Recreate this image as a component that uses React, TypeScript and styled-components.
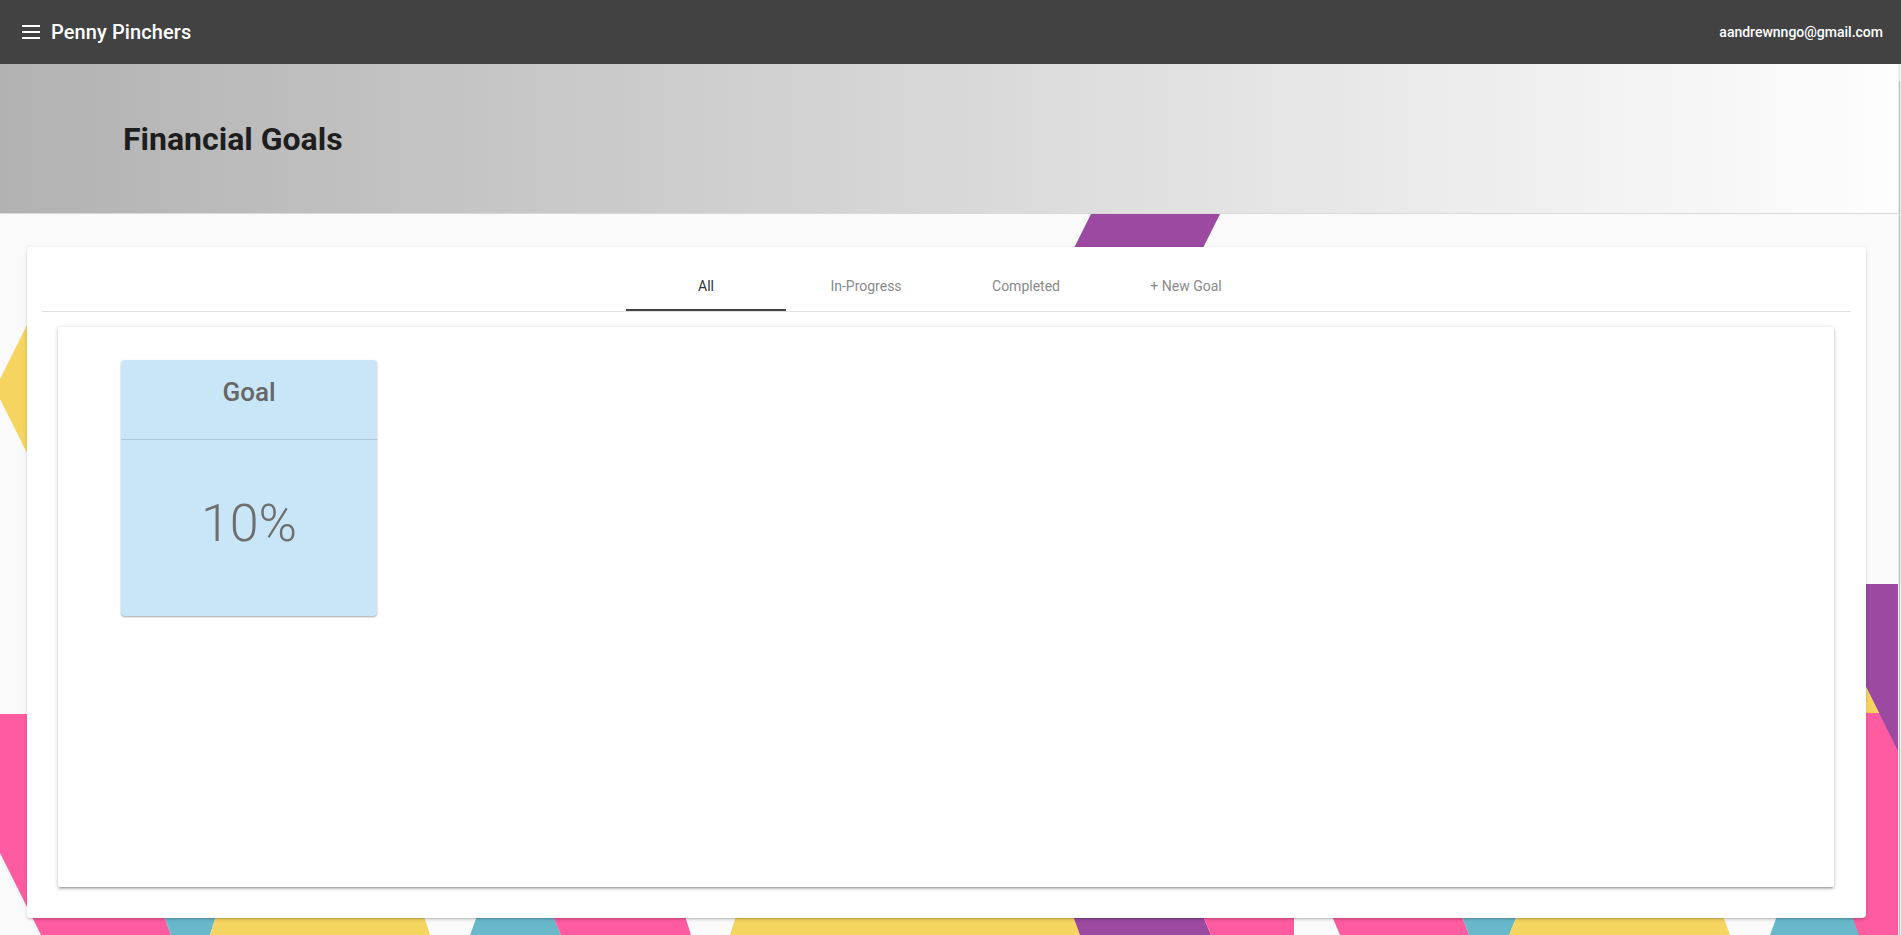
import React, { useState } from 'react';
import styled, { createGlobalStyle } from 'styled-components';

const GlobalStyle = createGlobalStyle`
  html, body {
    margin: 0;
    padding: 0;
    height: 100%;
    overflow: hidden;
  }

  body {
    background: #fafafa;
    font-family: Roboto, "Liberation Sans", Arial, sans-serif;
    -webkit-font-smoothing: antialiased;
  }

  * {
    box-sizing: border-box;
  }
`;

const Shell = styled.div`
  display: flex;
  flex-direction: column;
  height: 100vh;
`;

const NavBar = styled.nav`
  height: 64px;
  flex-shrink: 0;
  background: #424242;
  color: #fff;
  display: flex;
  align-items: center;
  justify-content: space-between;
  padding: 0 18px 0 19px;
`;

const Brand = styled.div`
  display: flex;
  align-items: center;
  gap: 8px;
  font-size: 20px;
  font-weight: 500;
  letter-spacing: 0.1px;
`;

const MenuButton = styled.button`
  width: 24px;
  height: 24px;
  padding: 0;
  border: none;
  background: transparent;
  color: #fff;
  cursor: pointer;
  display: flex;
`;

const UserEmail = styled.span`
  font-size: 14px;
  font-weight: 500;
`;

const Viewport = styled.div`
  flex: 1;
  display: flex;
  min-height: 0;
`;

const Content = styled.div`
  position: relative;
  flex: 1;
  overflow: hidden;
`;

const ScrollTrack = styled.div`
  width: 3px;
  background: #eeeeee;
  padding-top: 17px;
  display: flex;
  justify-content: center;
`;

const ScrollThumb = styled.div`
  width: 1px;
  height: 100%;
  background: #bdbdbd;
`;

const Backdrop = styled.svg`
  position: absolute;
  top: 0;
  left: 0;
  width: 1898px;
  height: 871px;
  z-index: 0;
`;

const PageHeader = styled.header`
  position: relative;
  z-index: 1;
  height: 150px;
  display: flex;
  align-items: center;
  padding-left: 123px;
  background: linear-gradient(to right, #b2b2b2, #fefefe);
  border-bottom: 1px solid #d9d9d9;
`;

const PageTitle = styled.h1`
  margin: 0;
  font-size: 32px;
  font-weight: 700;
  color: #1e1e1e;
`;

const Main = styled.main`
  position: relative;
  z-index: 1;
  padding: 33px 32px 0 27px;
`;

const OuterCard = styled.section`
  background: #fff;
  border-radius: 4px;
  padding: 16px 16px 16px 15px;
  box-shadow: 0 2px 2px 0 rgba(0, 0, 0, 0.08), 0 3px 1px -2px rgba(0, 0, 0, 0.1),
    0 1px 5px 0 rgba(0, 0, 0, 0.1);
`;

const TabRow = styled.div`
  display: flex;
  justify-content: center;
  height: 49px;
  border-bottom: 1px solid #e0e0e0;
`;

const Tab = styled.button<{ active?: boolean }>`
  width: 160px;
  height: 48px;
  padding: 0;
  border: none;
  border-bottom: 2px solid ${props => (props.active ? '#424242' : 'transparent')};
  background: transparent;
  font-family: inherit;
  font-size: 14px;
  color: ${props => (props.active ? '#333' : '#8a8a8a')};
  cursor: pointer;
`;

const PanelWrap = styled.div`
  padding: 15px 16px 15px 16px;
`;

const Panel = styled.div`
  height: 560px;
  background: #fff;
  border-radius: 2px;
  padding: 33px 63px;
  box-shadow: 0 2px 2px 0 rgba(0, 0, 0, 0.14), 0 3px 1px -2px rgba(0, 0, 0, 0.12),
    0 1px 5px 0 rgba(0, 0, 0, 0.2);
  display: flex;
  flex-wrap: wrap;
  align-content: flex-start;
  gap: 24px;
`;

const GoalCard = styled.div`
  width: 256px;
  height: 256px;
  background: #c9e6f8;
  border-radius: 4px;
  box-shadow: 0 1px 2px rgba(0, 0, 0, 0.35);
  display: flex;
  flex-direction: column;
  overflow: hidden;
`;

const GoalName = styled.div`
  height: 80px;
  flex-shrink: 0;
  padding-top: 16px;
  text-align: center;
  font-size: 26px;
  line-height: 32px;
  font-weight: 500;
  color: #666;
  border-bottom: 1px solid #a9c8dd;
`;

const GoalProgress = styled.div`
  flex: 1;
  display: flex;
  align-items: center;
  justify-content: center;
  padding-bottom: 8px;
  font-size: 52px;
  line-height: 52px;
  font-weight: 300;
  color: #6e6e6e;
`;

const PINK = '#ff5ba1';
const PURPLE = '#9b49a1';
const YELLOW = '#f5d55f';
const TEAL = '#69b9cb';

// bottom band: [x at y=916, x at y=935] for each edge
const band: Array<[string, number, number, number, number]> = [
  [TEAL, 164, 171, 216, 210],
  [YELLOW, 216, 210, 424, 430],
  [TEAL, 477, 470, 553, 561],
  [PINK, 553, 561, 685, 691],
  [YELLOW, 736, 730, 1073, 1080],
  [PURPLE, 1073, 1080, 1203, 1211],
  [PINK, 1203, 1211, 1294, 1294],
  [PINK, 1332, 1340, 1462, 1469],
  [TEAL, 1462, 1469, 1517, 1509],
  [YELLOW, 1517, 1509, 1723, 1730],
  [TEAL, 1777, 1770, 1852, 1859],
];

const Pattern = () => (
  <Backdrop viewBox="0 64 1898 871" preserveAspectRatio="none">
    <polygon fill={PURPLE} points="1098,200 1227,200 1150,354 1021,354" />
    <polygon fill={YELLOW} points="0,379 27,325 150,325 150,453 27,453 0,399" />
    <polygon fill={PINK} points="0,714 160,714 164,916 171,935 41,935 0,853" />
    <rect fill={PINK} x="1850" y="713" width="48" height="222" />
    <polygon fill={PURPLE} points="1850,584 1898,584 1898,751 1850,655" />
    <polygon fill={YELLOW} points="1850,655 1879,713 1850,713" />
    {band.map(([color, lt, lb, rt, rb], i) => (
      <polygon key={i} fill={color} points={`${lt},916 ${rt},916 ${rb},935 ${lb},935`} />
    ))}
  </Backdrop>
);

const tabs = ['All', 'In-Progress', 'Completed', '+ New Goal'];

const App: React.FC = () => {
  const [activeTab, setActiveTab] = useState('All');

  return (
    <>
      <GlobalStyle />
      <Shell>
        <NavBar>
          <Brand>
            <MenuButton aria-label="menu">
              <svg width="24" height="24" viewBox="0 0 24 24" fill="currentColor">
                <rect x="3" y="5" width="18" height="2" />
                <rect x="3" y="11" width="18" height="2" />
                <rect x="3" y="17" width="18" height="2" />
              </svg>
            </MenuButton>
            Penny Pinchers
          </Brand>
          <UserEmail>aandrewnngo@gmail.com</UserEmail>
        </NavBar>

        <Viewport>
          <Content>
            <Pattern />
            <PageHeader>
              <PageTitle>Financial Goals</PageTitle>
            </PageHeader>

            <Main>
              <OuterCard>
                <TabRow>
                  {tabs.map(tab => (
                    <Tab key={tab} active={activeTab === tab} onClick={() => setActiveTab(tab)}>
                      {tab}
                    </Tab>
                  ))}
                </TabRow>
                <PanelWrap>
                  <Panel>
                    <GoalCard>
                      <GoalName>Goal</GoalName>
                      <GoalProgress>10%</GoalProgress>
                    </GoalCard>
                  </Panel>
                </PanelWrap>
              </OuterCard>
            </Main>
          </Content>
          <ScrollTrack>
            <ScrollThumb />
          </ScrollTrack>
        </Viewport>
      </Shell>
    </>
  );
};

export default App;
